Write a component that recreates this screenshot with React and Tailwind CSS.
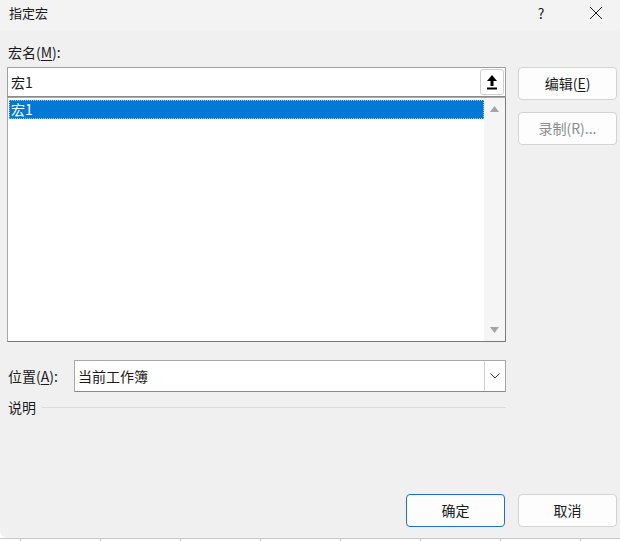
import React from "react";

const font = { fontFamily: '"Noto Sans CJK SC", "Noto Sans", sans-serif' };

const Btn = ({ children, disabled, primary }) => (
  <button
    className={`w-[99px] h-[33px] shrink-0 rounded-[4px] border text-[14px] flex items-center justify-center ${
      primary ? "border-[#1f6fc2] bg-[#fdfdfd]" : "border-[#d3d3d3] bg-[#fdfdfd]"
    } ${disabled ? "text-[#8c8c8c]" : "text-[#1b1b1b]"}`}
  >
    {children}
  </button>
);

export default function App() {
  return (
    <div className="w-[620px] h-[541px] bg-white overflow-hidden text-[#1b1b1b]" style={font}>
      <div className="h-[538px] bg-[#f0f0f0] rounded-bl-[8px] flex flex-col">
        {/* title bar */}
        <div className="h-[30px] bg-[#f3f3f3] flex items-center pl-[9px] text-[13px]">
          <span className="flex-1 -mt-[4px]">指定宏</span>
          <span className="w-[20px] text-center text-[14px] -mt-[4px] mr-[38px]">?</span>
          <svg width="14" height="14" viewBox="0 0 14 14" className="mr-[17px] -mt-[4px]">
            <path d="M1 1 L13 13 M13 1 L1 13" stroke="#1b1b1b" strokeWidth="1" fill="none" />
          </svg>
        </div>

        <div className="flex-1 flex flex-col pl-[7px] pr-[3px]">
          <div className="flex gap-[12px] mt-[13px]">
            {/* left column */}
            <div className="w-[499px] shrink-0 flex flex-col">
              <div className="text-[14px] leading-[18px] pl-[1px] mb-[6px]">
                宏名(<span className="underline underline-offset-2">M</span>):
              </div>
              <div className="h-[30px] bg-white border border-[#a0a0a0] border-b-[#8a8a8a] flex items-center">
                <span className="flex-1 pl-[3px] text-[14px]">宏1</span>
                <div className="w-[24px] h-[26px] mr-[1px] border border-[#cfcfcf] rounded-[3px] bg-white flex items-center justify-center">
                  <svg width="12" height="16" viewBox="0 0 12 16">
                    <path d="M6 1 L11 7 L7.5 7 L7.5 12 L4.5 12 L4.5 7 L1 7 Z" fill="#000" />
                    <rect x="1" y="13.5" width="10" height="2" fill="#000" />
                  </svg>
                </div>
              </div>
              <div className="h-[245px] bg-white border border-[#a8a8a8] border-r-[#7a7a7a] border-b-[#7a7a7a] flex">
                <div className="flex-1 pt-[2px] pl-[1px]">
                  <div className="h-[19px] bg-[#0078d7] text-white text-[14px] leading-[19px] pl-[2px] outline outline-1 outline-dotted outline-[#9ec8ee] -outline-offset-1">
                    宏1
                  </div>
                </div>
                <div className="w-[21px] bg-[#f5f5f5] flex flex-col items-center justify-between py-[8px]">
                  <svg width="9" height="6" viewBox="0 0 9 6">
                    <path d="M4.5 0 L9 6 L0 6 Z" fill="#a3a3a3" />
                  </svg>
                  <svg width="9" height="6" viewBox="0 0 9 6">
                    <path d="M0 0 L9 0 L4.5 6 Z" fill="#a3a3a3" />
                  </svg>
                </div>
              </div>
            </div>
            {/* right column */}
            <div className="flex flex-col gap-[12px] pt-[24px]">
              <Btn>
                编辑(<span className="underline underline-offset-2">E</span>)
              </Btn>
              <Btn disabled>录制(R)...</Btn>
            </div>
          </div>

          {/* location */}
          <div className="w-[499px] flex items-center mt-[18px]">
            <span className="w-[67px] text-[14px] pl-[1px]">
              位置(<span className="underline underline-offset-2">A</span>):
            </span>
            <div className="flex-1 h-[32px] bg-white border border-[#a8a8a8] border-b-[#8a8a8a] flex items-center">
              <span className="flex-1 pl-[3px] text-[14px]">当前工作簿</span>
              <div className="w-[21px] h-full border-l border-[#d0d0d0] flex items-center justify-center">
                <svg width="10" height="6" viewBox="0 0 10 6">
                  <path d="M0.5 0.5 L5 5 L9.5 0.5" stroke="#333" strokeWidth="1" fill="none" />
                </svg>
              </div>
            </div>
          </div>

          {/* description */}
          <div className="w-[499px] flex items-center mt-[5px] gap-[6px]">
            <span className="text-[14px] pl-[1px]">说明</span>
            <div className="flex-1 h-px bg-[#dadada]" />
          </div>

          <div className="flex-1" />

          <div className="flex justify-end gap-[13px] mb-[11px]">
            <Btn primary>确定</Btn>
            <Btn>取消</Btn>
          </div>
        </div>
      </div>
      <div className="h-[3px] flex border-t border-[#c8c8c8]">
        <div className="w-[20px] shrink-0" />
        {[0, 1, 2, 3, 4, 5, 6, 7].map((i) => (
          <div key={i} className="w-[80px] shrink-0 border-l border-[#c8c8c8]" />
        ))}
      </div>
    </div>
  );
}
